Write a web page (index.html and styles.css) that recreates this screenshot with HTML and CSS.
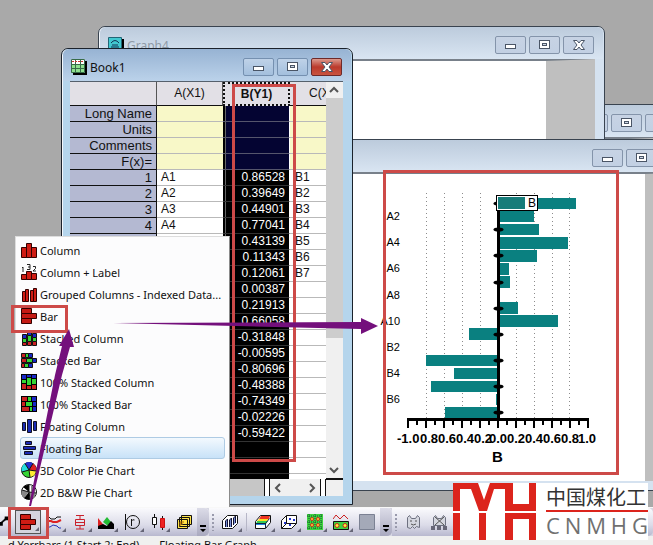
FILE: index.html
```html
<!DOCTYPE html>
<html lang="en">
<head>
<meta charset="utf-8">
<title>Origin workspace</title>
<link rel="stylesheet" href="styles.css">
</head>
<body>
<svg class="defs" aria-hidden="true">
  <symbol id="i-min" viewBox="0 0 14 10"><rect x="1.500" y="4.500" width="10" height="4" fill="#fff" stroke="#4a5566"/></symbol>
  <symbol id="i-max" viewBox="0 0 14 10"><rect x="1.500" y=".5" width="10" height="8" fill="#fff" stroke="#4a5566"/><rect x="4.500" y="3.500" width="4" height="2" fill="#cfd9e6" stroke="#4a5566"/></symbol>
  <symbol id="i-close" viewBox="0 0 14 10"><path d="M1.500 .5h3.500l2 2.500 2-2.500h3.500l-3.500 4.500 3.500 4.500h-3.500l-2-2.500-2 2.500h-3.500l3.500-4.500z" fill="#fff" stroke="#4a5566"/></symbol>
</svg>
<main class="desktop">
  <section class="window back" aria-label="Background window">
    <header class="titlebar"><span class="caption"></span>
      <button aria-label="Minimize"><svg><use href="#i-min"/></svg></button><button aria-label="Maximize"><svg><use href="#i-max"/></svg></button><button aria-label="Close"><svg><use href="#i-close"/></svg></button></header>
    <div class="page"></div>
  </section>
  <section class="window graph4" aria-label="Graph4">
    <header class="titlebar"><svg class="appicon" viewBox="0 0 16 16"><path d="M2 2h14v14H2z"/><path fill="#42c8d0" stroke="#267" d="M.5.5h13v13H.5z"/><path d="M3 6q4-5 8 0M3 10h8M4 8h6" fill="none" stroke="#135"/></svg><span class="caption">Graph4</span>
      <button aria-label="Minimize"><svg><use href="#i-min"/></svg></button><button aria-label="Maximize"><svg><use href="#i-max"/></svg></button><button aria-label="Close"><svg><use href="#i-close"/></svg></button></header>
    <div class="page wide-margin"></div>
  </section>
  <section class="window front" aria-label="Bar graph">
    <header class="titlebar"><span class="caption"></span>
      <button aria-label="Minimize"><svg><use href="#i-min"/></svg></button><button aria-label="Maximize"><svg><use href="#i-max"/></svg></button><button aria-label="Close"><svg><use href="#i-close"/></svg></button></header>
    <div class="page">
      <svg class="chart" width="236" height="300" viewBox="380 174 236 300" role="img" aria-label="Bar chart of B">
        <path class="grid" d="M426.500 193V418M444.500 193V418M462.500 193V418M480.500 193V418M516.500 193V418M534.500 193V418M552.500 193V418M569.500 193V418"/>
        <path fill="#0a8080" d="M498 198h78v11h-78zM498 211h36v11h-36zM498 224h41v11h-41zM498 237h70v12h-70zM498 250h39v12h-39zM498 263h11v12h-11zM498 276h12v12h-12zM498 302h20v12h-20zM498 315h60v12h-60zM469 328h29v12h-29zM426 355h72v11h-72zM454 368h44v11h-44zM431 381h67v11h-67zM496 394h2v11h-2zM445 407h53v12h-53z"/>
        <path d="M497 198h3v220h-3zM407 418h182v3h-182z"/>
        <path stroke="#000" stroke-width="2" d="M408 420v8M426 420v8M444 420v8M462 420v8M480 420v8M498 420v8M516 420v8M534 420v8M552 420v8M570 420v8M588 420v8M417 420v5M435 420v5M453 420v5M471 420v5M489 420v5M507 420v5M525 420v5M543 420v5M561 420v5M579 420v5"/>
        <g><ellipse cx="498.500" cy="203.500" rx="5" ry="2"/><ellipse cx="498.500" cy="229.500" rx="5" ry="2"/><ellipse cx="498.500" cy="255.500" rx="5" ry="2"/><ellipse cx="498.500" cy="282.500" rx="5" ry="2"/><ellipse cx="498.500" cy="308.500" rx="5" ry="2"/><ellipse cx="498.500" cy="334.500" rx="5" ry="2"/><ellipse cx="498.500" cy="360.500" rx="5" ry="2"/><ellipse cx="498.500" cy="386.500" rx="5" ry="2"/><ellipse cx="498.500" cy="412.500" rx="5" ry="2"/></g>
        <rect x="496.500" y="195.500" width="41" height="15" fill="#fff" stroke="#000"/><path fill="#177c7a" d="M498 197h27v12h-27z"/><text x="528" y="207" font-size="12">B</text>
        <g font-size="11" text-anchor="end"><text x="400" y="220">A2</text><text x="400" y="246">A4</text><text x="400" y="272">A6</text><text x="400" y="299">A8</text><text x="400" y="325">A10</text><text x="400" y="351">B2</text><text x="400" y="377">B4</text><text x="400" y="403">B6</text></g>
        <g font-size="13" font-weight="bold"><text x="397" y="443">-1.0</text><text x="420" y="443">0.8</text><text x="438" y="443">0.6</text><text x="456" y="443">0.4</text><text x="474" y="443">0.2</text><text x="489" y="443">0.0</text><text x="507" y="443">0.2</text><text x="525" y="443">0.4</text><text x="543" y="443">0.6</text><text x="561" y="443">0.8</text><text x="578" y="443">1.0</text></g>
        <text x="492" y="462" font-size="15" font-weight="bold">B</text>
      </svg>
    </div>
  </section>
  <section class="window book" aria-label="Book1">
    <header class="titlebar"><svg class="appicon" viewBox="0 0 16 16"><path d="M2 2h14v14H2z"/><path fill="#fff" d="M0 0h14v14H0z"/><path fill="#8ee08e" d="M0 5h14v9H0z"/><path d="M0 5.500h14M0 9.500h14M4.500 0v14M9.500 0v14M.5.5h13v13H.5z" fill="none" stroke="#376b48"/><path d="M1 2.500h12" stroke="#c33" stroke-dasharray="2 1"/></svg><span class="caption">Book1</span>
      <button aria-label="Minimize"><svg><use href="#i-min"/></svg></button><button aria-label="Maximize"><svg><use href="#i-max"/></svg></button><button class="close" aria-label="Close"><svg><use href="#i-close"/></svg></button></header>
    <div class="sheet">
      <div class="cells">
      <table>
        <colgroup><col class="c-head"><col class="c-a"><col class="c-b"><col></colgroup>
        <thead><tr><th></th><th>A(X1)</th><th class="sel">B(Y1)</th><th class="cut">C(X2)</th></tr></thead>
        <tbody class="meta">
          <tr><th>Long Name</th><td></td><td></td><td></td></tr><tr><th>Units</th><td></td><td></td><td></td></tr><tr><th>Comments</th><td></td><td></td><td></td></tr><tr><th>F(x)=</th><td></td><td></td><td></td></tr>
        </tbody>
        <tbody>
          <tr><th>1</th><td>A1</td><td>0.86528</td><td>B1</td></tr><tr><th>2</th><td>A2</td><td>0.39649</td><td>B2</td></tr><tr><th>3</th><td>A3</td><td>0.44901</td><td>B3</td></tr><tr><th>4</th><td>A4</td><td>0.77041</td><td>B4</td></tr><tr><th></th><td></td><td>0.43139</td><td>B5</td></tr><tr><th></th><td></td><td>0.11343</td><td>B6</td></tr><tr><th></th><td></td><td>0.12061</td><td>B7</td></tr><tr><th></th><td></td><td>0.00387</td><td></td></tr><tr><th></th><td></td><td>0.21913</td><td></td></tr><tr><th></th><td></td><td>0.66058</td><td></td></tr><tr><th></th><td></td><td>-0.31848</td><td></td></tr><tr><th></th><td></td><td>-0.00595</td><td></td></tr><tr><th></th><td></td><td>-0.80696</td><td></td></tr><tr><th></th><td></td><td>-0.48388</td><td></td></tr><tr><th></th><td></td><td>-0.74349</td><td></td></tr><tr><th></th><td></td><td>-0.02226</td><td></td></tr><tr><th></th><td></td><td>-0.59422</td><td></td></tr><tr><th></th><td></td><td></td><td></td></tr><tr><th></th><td></td><td></td><td></td></tr><tr><th></th><td></td><td></td><td></td></tr>
        </tbody>
      </table>
      </div>
      <div class="vscroll"><svg viewBox="0 0 16 16"><path d="M4 10l4-4 4 4"/></svg><div class="thumb"></div><svg viewBox="0 0 16 16"><path d="M4 6l4 4 4-4"/></svg></div>
    </div>
    <footer class="hscroll"><div class="track"></div><div class="arrows"><svg viewBox="0 0 16 16"><path d="M10 4L6 8l4 4"/></svg><svg viewBox="0 0 16 16"><path d="M6 4l4 4-4 4"/></svg></div><div class="resize"></div></footer>
  </section>

  <nav class="menu" aria-label="Graph types">
    <button><svg viewBox="0 0 16 16"><g fill="#d01c14" stroke="#300"><path d="M.5 5.500h5v10h-5zM10.500 5.500h5v10h-5zM5.500 1.500h5v14h-5z"/></g></svg>Column</button>
    <button><svg viewBox="0 0 16 16"><g fill="#d01c14" stroke="#300"><path d="M.5 10.500h5v5h-5zM10.500 9.500h5v6h-5zM5.500 7.500h5v8h-5z"/></g><path d="M1 4l1-1v5M6 .5h3v5H6M7 3h2M12 2.500h2.500v2L12 7h3" fill="none" stroke="#222"/></svg>Column + Label</button>
    <button><svg viewBox="0 0 16 16"><g fill="#d01c14" stroke="#300"><path d="M1.500 5.500h3v10h-3zM4.500 3.500h3v12h-3zM9.500 4.500h3v11h-3zM12.500 2.500h3v13h-3z"/></g></svg>Grouped Columns - Indexed Data...</button>
    <button><svg viewBox="0 0 16 16"><path fill="#c41a14" stroke="#300" d="M.5.5h10v5H.5zM.5 5.500h15v5H.5zM.5 10.500h10v5H.5z"/></svg>Bar</button>
    <button><svg viewBox="0 0 16 16"><g stroke="#111"><path fill="#1828c8" d="M1.500 4.500h4v4h-4zM6.500.5h4v5h-4zM11.500 3.500h4v4h-4z"/><path fill="#35d535" d="M1.500 8.500h4v4h-4zM6.500 5.500h4v6h-4zM11.500 7.500h4v4h-4z"/><path fill="#c22" d="M1.500 12.500h4v3h-4zM6.500 11.500h4v4h-4zM11.500 11.500h4v4h-4z"/></g></svg>Stacked Column</button>
    <button><svg viewBox="0 0 16 16"><g stroke="#111"><path fill="#c22" d="M.5 1.500h4v4h-4zM.5 6.500h5v4h-5zM.5 11.500h3v4h-3z"/><path fill="#35d535" d="M4.500 1.500h3v4h-3zM5.500 6.500h6v4h-6zM3.500 11.500h4v4h-4z"/><path fill="#1828c8" d="M7.500 1.500h4v4h-4zM11.500 6.500h4v4h-4zM7.500 11.500h4v4h-4z"/></g></svg>Stacked Bar</button>
    <button><svg viewBox="0 0 16 16"><path d="M0 0h16v16H0z"/><path fill="#1828c8" d="M1 1h4v4H1zM6 1h4v2H6zM11 1h4v3h-4z"/><path fill="#35d535" d="M1 6h4v3H1zM6 4h4v7H6zM11 5h4v5h-4z"/><path fill="#c22" d="M1 10h4v5H1zM6 12h4v3H6zM11 11h4v4h-4z"/></svg>100% Stacked Column</button>
    <button><svg viewBox="0 0 16 16"><path d="M0 0h16v16H0z"/><path fill="#c22" d="M1 1h5v4H1zM1 6h3v4H1zM1 11h7v4H1z"/><path fill="#35d535" d="M7 1h3v4H7zM5 6h6v4H5zM9 11h2v4H9z"/><path fill="#1828c8" d="M11 1h4v4h-4zM12 6h3v4h-3zM12 11h3v4h-3z"/></svg>100% Stacked Bar</button>
    <button><svg viewBox="0 0 16 16"><path fill="#1a2bb5" stroke="#112" d="M1.500 4.500h3v8h-3zM6.500 1.500h4v13h-4zM12.500 3.500h3v9h-3z"/></svg>Floating Column</button>
    <button class="hover"><svg viewBox="0 0 16 16"><path fill="#1a2bb5" stroke="#112" d="M4.500 1.500h6v3h-6zM2.500 6.500h12v3h-12zM3.500 11.500h8v3h-8z"/></svg>Floating Bar</button>
    <button><svg viewBox="0 0 16 16"><circle cx="8" cy="8" r="7.500" fill="#35d535" stroke="#111"/><path fill="#2030d0" d="M8 8L4 1.500A7 7 0 0 1 12 1.500z"/><path fill="#d22" d="M8 8l4-6.500A7 7 0 0 1 15 9z"/><path fill="#fe3" d="M8 8l7 1a7 7 0 0 1-6 6z"/><path fill="#2dd" d="M8 8L1 10A7 7 0 0 1 4 1.500z"/><path d="M8 8L4 1.500M8 8l4-6.500M8 8l7 1M8 8l1 7M8 8l-7 2" stroke="#111"/></svg>3D Color Pie Chart</button>
    <button><svg viewBox="0 0 16 16"><circle cx="8" cy="8" r="7.500" fill="#fff" stroke="#111"/><path d="M8 8L2 3A7 7 0 0 1 8 1zM8 8l-5 6a7 7 0 0 0 6 1z"/><path fill="#888" d="M8 8L1 6a7 7 0 0 0 2 8zM8 8l7 1a7 7 0 0 1-6 6z"/><path d="M8 8V1M8 8l7 1M8 8l1 7M8 8l-7-2M11 2v6M13 4v4" stroke="#111"/></svg>2D B&amp;W Pie Chart</button>
  </nav>
</main>

<div class="toolbar" role="toolbar" aria-label="Graph tools">
  <div class="group">
    <button class="stub" aria-label="Line"><svg viewBox="0 0 16 16"><path d="M0 10l7-6" stroke="#111" stroke-width="2"/><path d="M5 2h4v4H5zM0 8h3v4H0z"/></svg></button>
    <button class="pressed more" aria-label="Bar"><svg viewBox="0 0 16 16"><path fill="#d01c14" stroke="#300" d="M.5.5h10v5H.5zM.5 5.500h15v5H.5zM.5 10.500h10v5H.5z"/></svg></button>
    <button class="more" aria-label="Multiple curves"><svg viewBox="0 0 16 16"><g fill="none"><path stroke="#111" d="M0 3h3l2 2h4l2-2h4"/><path stroke="#d22" stroke-width="2" d="M0 7h5l2 1h4l4-2"/><path stroke="#23b" d="M0 13h4l3-2 4 1 2 2h2"/></g></svg></button>
    <button class="more" aria-label="Box"><svg viewBox="0 0 16 16"><path fill="none" stroke="#c9202b" d="M4 1.500h8M8 2v3M3.500 5.500h9v6h-9zM3 8.500h10M8 12v3M4 15h8"/></svg></button>
    <button class="more" aria-label="Area"><svg viewBox="0 0 16 16"><path fill="#2b3" d="M5 8l4-5 4 5-3 4z"/><path fill="#d22" d="M0 4l8 10H0z"/><path d="M0 12l5-2 4 2 4-5 3 3v5H0z"/></svg></button>
    <button class="more" aria-label="Polar"><svg viewBox="0 0 16 16"><circle cx="9" cy="8" r="6.500" fill="none" stroke="#111"/><path d="M1.500 0v16M7.500 5v7M7.500 7q1-2 3-1" fill="none" stroke="#111"/></svg></button>
    <button class="more" aria-label="Stock"><svg viewBox="0 0 16 16"><path d="M4.500 0v14M12.500 2v14" stroke="#111"/><path fill="#fff" stroke="#111" d="M2.500 3.500h4v7h-4z"/><path fill="#e22" stroke="#c11" d="M10.500 4.500h4v9h-4z"/></svg></button>
    <button aria-label="Templates"><svg viewBox="0 0 16 16"><path fill="#ffe34a" stroke="#111" d="M5.500 1.500h10v9h-10zM3.500 3.500h10v9h-10zM1.500 5.500h10v9h-10z"/><path d="M4 12V8h4M4 10h3" fill="none" stroke="#a60"/></svg></button>
    <button class="overflow" aria-label="More tools"><svg viewBox="0 0 8 8"><path d="M1 0h6v2H1zM1 4h6L4 7z"/></svg></button>
  </div>
  <div class="group second">
    <span class="grip"></span>
    <button class="more" aria-label="3D bars"><svg viewBox="0 0 16 16"><path fill="#fff" stroke="#111" d="M.5 6.500l5-5h10v8l-5 5H.5z"/><path fill="#7890d8" stroke="#113" d="M3.500 13V7l2-2v8M7.500 13V6l2-2v9M11.500 11V4l2-2v7"/></svg></button>
    <span class="sep"></span>
    <button class="more" aria-label="Surface"><svg viewBox="0 0 16 16"><path fill="#fff" stroke="#111" d="M.5 7.500l5-6h10v7l-5 6H.5z"/><path fill="#e32" d="M6 2h9l-1 3H4z"/><path fill="#fd2" d="M4 5h10l-2 2H2z"/><path fill="#3c5" d="M2 7h11l-2 3H1z"/><path fill="#28d" d="M1 9h10v2H1z"/><path d="M11 9.500h-10M10.500 14V9.500l4-5" fill="none" stroke="#124"/></svg></button>
    <button class="more" aria-label="3D scatter"><svg viewBox="0 0 16 16"><path fill="#fff" stroke="#111" d="M.5 6.500l5-5h10v8l-5 5H.5zM5.500 1.500v8l-5 5M5.500 9.500h10"/><path fill="#23c" d="M3 8h2v2H3zM8 4h2v2H8zM12 5h2v2h-2zM8 10h2v2H8z"/></svg></button>
    <button class="more" aria-label="Contour"><svg viewBox="0 0 16 16"><path fill="#3ed33e" d="M0 0h16v16H0z"/><path d="M2 0v16M8 0v16M14 0v16M0 2h16M0 8h16M0 14h16" stroke="#153"  stroke-dasharray="1 1"/><g fill="#fe3" stroke="#c22"><circle cx="5" cy="5" r="1.500"/><circle cx="11" cy="5" r="1.500"/><circle cx="5" cy="11" r="1.500"/><circle cx="11" cy="11" r="1.500"/></g></svg></button>
    <button class="more" aria-label="Profile"><svg viewBox="0 0 16 16"><path fill="none" stroke="#c22" d="M0 5l3-4 4 4 4-4 4 4"/><path fill="#3ed33e" stroke="#111" d="M.5 7.500h15v8H.5z"/><g fill="#fe3" stroke="#c22"><circle cx="4" cy="11.500" r="2"/><circle cx="12" cy="11.500" r="2"/></g></svg></button>
    <button aria-label="Image"><svg viewBox="0 0 16 16"><path fill="#a4a9b8" stroke="#7b8193" d="M.5.5h15v15H.5z"/></svg></button>
    <button class="overflow" aria-label="More tools"><svg viewBox="0 0 8 8"><path d="M1 0h6v2H1zM1 4h6L4 7z"/></svg></button>
  </div>
  <div class="group last">
    <span class="grip"></span>
    <button aria-label="Mask"><svg viewBox="0 0 16 16"><path fill="#d4d6df" stroke="#6d7080" d="M2.500 13.500V3.500l2-2 2 3h4l2-3 2 2v10l-3-1-2 2-2-2-2 2z"/><path stroke="#555" d="M5 7h2M10 7h2M6 10q2 2 5 0" fill="none"/></svg></button>
    <button aria-label="Unmask"><svg viewBox="0 0 16 16"><path fill="#d4d6df" stroke="#6d7080" d="M2.500 11.500V3.500l2-2 2 3h4l2-3 2 2v8z"/><path stroke="#555" d="M4 3l9 8M13 3l-9 8"/><path fill="#667" d="M0 12h4v4H0zM6 12h4v4H6zM12 12h4v4h-4z"/></svg></button>
    <span class="sep"></span>
  </div>
</div>
<footer class="status"><span>d Yerrbars (1 Start 2: End)</span><span>Floating Bar Graph</span></footer>

<aside class="watermark">
  <svg viewBox="0 0 83 57" width="83" height="57" role="img" aria-label="CNMHG logo"><path fill="#dc241c" d="M0 0h25l6 17 6-17h23v21h16V0h7v28H52V6H41L34 28h-8L18 6H7v22H0zM0 30h7v27H0zM26 30h7v27h-7zM52 30h31v27h-7V36H60v21h-8z"/></svg>
  <div class="brand"><span lang="zh">中国煤化工</span><div class="latin"><span>C</span><span>N</span><span>M</span><span>H</span><span>G</span></div></div>
</aside>
<svg class="annotations" width="653" height="545" viewBox="0 0 653 545" aria-hidden="true">
  <g fill="none" stroke="#cd4a48" stroke-width="3"><path d="M233.500 85.500h61v375h-61zM384.500 171.500h233v302h-233zM12.500 306.500h54v25h-54zM9.500 508.500h38v29h-38z"/></g>
  <path fill="#74107c" d="M113 323l248-1v-4l17 8-17 8v-5zM29 506l26-131 7-29h-3l10-17 5 18h-4l-8 28-31 131z"/>
</svg>
</body>
</html>
```
FILE: styles.css
```css
* { box-sizing: border-box; }
body {
  margin: 0;
  height: 100vh;
  display: flex;
  flex-direction: column;
  overflow: hidden;
  position: relative;
  font: 12px "Liberation Sans", Arial, sans-serif;
  color: #111;
}
button { font: inherit; color: inherit; padding: 0; border: 0; background: none; }
.defs { position: absolute; width: 0; height: 0; }

.desktop { flex: 1; position: relative; overflow: hidden; background: #a9a9a9; }

/* Child windows */
.window {
  position: absolute;
  display: flex;
  flex-direction: column;
  border: 1px solid #39434f;
  border-radius: 7px 7px 0 0;
  padding: 0 9px 9px 8px;
  background: #d5e2f0;
  box-shadow: inset 1px 1px #f2f7fc;
}
.titlebar {
  display: flex;
  align-items: center;
  gap: 3px;
  height: 32px;
  margin: 0 -8px 0 -7px;
  padding: 4px 9px 0 8px;
  border-radius: 6px 6px 0 0;
  background: linear-gradient(#bccbdc, #d9e5f2);
}
.caption { flex: 1; font: 12px "Noto Sans", sans-serif; color: #8f9aa6; }
.titlebar button {
  display: flex;
  align-items: center;
  justify-content: center;
  width: 31px;
  height: 18px;
  border: 1px solid #8494aa;
  border-radius: 2px;
  background: linear-gradient(#c7d3e4, #c2d0e3);
}
.titlebar button svg { width: 14px; height: 10px; }
.appicon { width: 16px; height: 16px; }
.page {
  flex: 1;
  background: #fff;
  border-top: 2px solid #78808a;
  border-right: 49px solid #bfbfbf;
}
.back { left: 400px; right: -34px; top: 104px; height: 200px; }
.graph4 { left: 98px; width: 507px; top: 26px; height: 220px; }
.front { left: 340px; right: -49px; top: 139px; height: 352px; }
.front .page { padding-left: 31px; border-right-width: 47px; }
.chart { display: block; font-family: "Liberation Sans", Arial, sans-serif; }
.grid { fill: none; stroke: #8c8c8c; stroke-dasharray: 1 3; }

.book { left: 61px; width: 292px; top: 48px; height: 457px; padding-bottom: 8px; background: #b5d5ec; border-color: #1b222b; }
.book .titlebar { background: linear-gradient(#97b3d3, #bbd2ea); }
.book .caption { color: #111; }
.book .titlebar button { background: linear-gradient(#bfd2e8, #a3bfdd); border-color: #7590b0; }
.book .titlebar .close { background: linear-gradient(#dc9a8e, #bb3a2c 50%, #c95440); border-color: #6e2a2a; }

/* Worksheet */
.sheet { flex: 1; min-height: 0; display: flex; border-top: 1px solid #55606c; background: #fff; }
.cells { flex: 1; min-width: 0; overflow: hidden; }
table { width: 100%; table-layout: fixed; border-collapse: separate; border-spacing: 0; }
.c-head { width: 87px; }
.c-a { width: 66px; }
.c-b { width: 67px; }
th, td { height: 16px; padding: 0 4px; overflow: hidden; white-space: nowrap; line-height: 15px; border-bottom: 1px solid #b9b9b9; }
thead th { height: 24px; font-weight: normal; text-align: center; background: #e2e0e6; border-bottom-color: #111; border-right: 1px solid #555; }
thead .sel { font-weight: bold; border: 2px dotted #111; }
thead .cut { text-align: left; padding-left: 19px; border-right: 0; text-overflow: clip; }
tbody th { font-size: 13px; font-weight: normal; text-align: right; background: #b4b9d2; border-bottom-color: #111; border-right: 1px solid #111; }
td:nth-child(3) { color: #fff; background: #000; text-align: right; border-bottom-color: #333; border-right: 1px solid #fff; box-shadow: inset 2px 0 #000, inset 3px 0 #666; }
td:nth-child(4) { padding-left: 5px; }
.meta td { background: #f8f8c8; }
.meta td:nth-child(3) { background: #040432; border-bottom-color: #55556c; }
.vscroll { width: 17px; display: flex; flex-direction: column; background: #f0f0f0; border-bottom: 1px solid #111; }
.vscroll svg, .arrows svg { width: 16px; height: 16px; fill: none; stroke: #555; stroke-width: 2; }
.thumb { height: 240px; margin-bottom: auto; background: #cdcdcd; }
.hscroll { display: flex; height: 17px; background: #fff; }
.track { flex: 1; background: #c6c6c6; border-right: 1px solid #111; }
.arrows { width: 52px; margin: 0 4px; display: flex; justify-content: space-between; align-items: center; background: #f0f0f0; border: solid #111; border-width: 0 1px; }
.resize { width: 18px; background: #f0f0f0; border: solid #111; border-width: 1px 0 0 1px; }

/* Graph type menu */
.menu {
  position: absolute;
  left: 15px;
  top: 236px;
  width: 215px;
  padding: 2px 4px 4px 4px;
  display: flex;
  flex-direction: column;
  background: #fcfcfd;
  border: 1px solid #8b8b8b;
  border-left-color: #ddd;
  border-top-color: #ddd;
}
.menu button {
  display: flex;
  align-items: center;
  gap: 3px;
  height: 22px;
  border: 1px solid transparent;
  border-radius: 3px;
  font: 11px "Noto Sans", sans-serif;
  white-space: nowrap;
}
.menu svg { width: 16px; height: 16px; flex: none; }
.menu .hover { border-color: #aecbe4; background: linear-gradient(#f3f9fe, #c8e2f8); }

/* Toolbar */
.toolbar { display: flex; height: 29px; background: #d7d7e3; border-top: 1px solid #f8f8f8; }
.group { display: flex; align-items: center; background: linear-gradient(#fafafd, #dcdce9 60%, #b9b9cf); border-radius: 0 5px 5px 0; }
.group button { position: relative; width: 26px; height: 24px; display: flex; align-items: center; justify-content: center; }
.group button svg { width: 16px; height: 16px; }
.group .stub { width: 15px; justify-content: flex-start; }
.group .pressed { border: 1px solid #555; background: #d4d4de; }
.more::after { content: ""; position: absolute; right: 1px; bottom: 2px; border: 2px solid; border-color: transparent #667 #667 transparent; }
.group .overflow { width: 12px; height: 28px; align-items: flex-end; padding-bottom: 3px; background: linear-gradient(#dcdce8, #a9a9bf); border-radius: 0 5px 5px 0; }
.group .overflow svg { width: 8px; height: 8px; }
.grip { width: 2px; height: 17px; margin: 0 3px; background: repeating-linear-gradient(#999aac 0 2px, transparent 2px 4px); }
.sep { width: 1px; height: 18px; margin: 0 3px; background: #b6b6c7; }
.last { flex: 1; }
.status { height: 9px; overflow: hidden; display: flex; gap: 20px; padding: 2px 8px 0; background: #f0f0ef; font: 11px/13px "Noto Sans", sans-serif; white-space: nowrap; }

/* Corner mark */
.watermark { position: absolute; right: 5px; bottom: 5px; display: flex; gap: 10px; background: #fff; }
.brand { width: 102px; display: flex; flex-direction: column; color: #333; font: 20px/27px "Noto Sans CJK SC", sans-serif; }
.latin { display: flex; justify-content: space-between; border-top: 2px solid #dc241c; font: 22px/27px "Open Sans", sans-serif; color: #707070; }
.annotations { position: absolute; left: 0; top: 0; pointer-events: none; }
```
